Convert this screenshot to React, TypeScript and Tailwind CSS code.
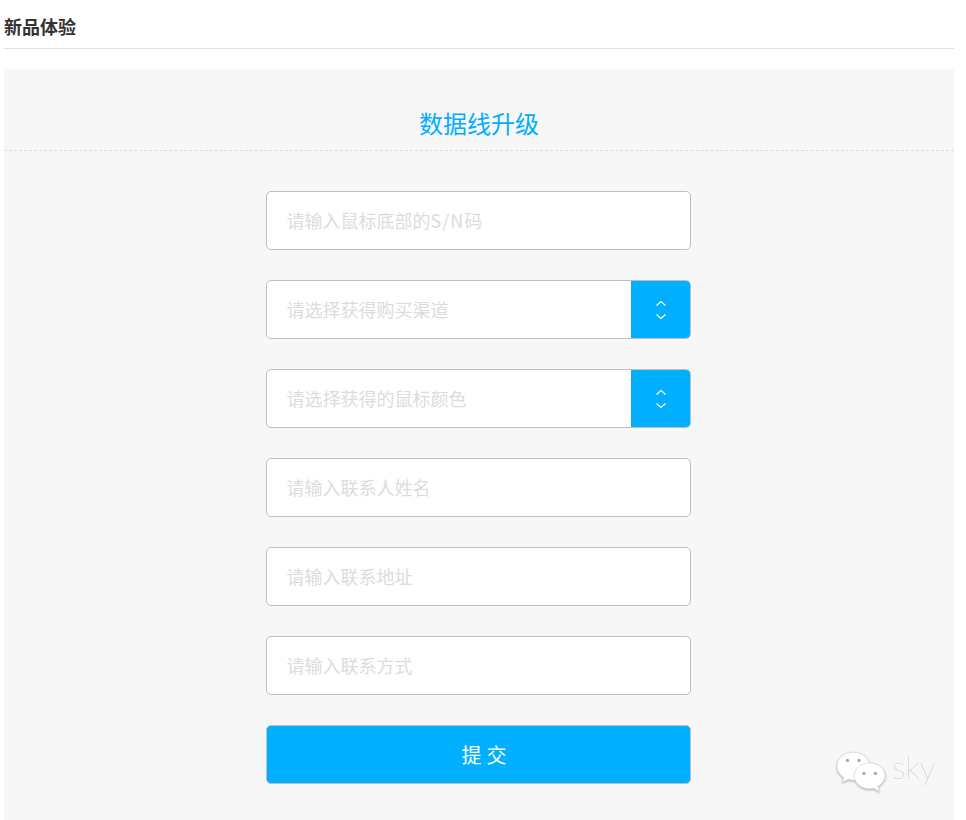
import React, { ReactNode } from "react";

const font = { fontFamily: '"Noto Sans CJK SC", sans-serif' };

function Chevrons() {
  return (
    <svg width="12" height="20" viewBox="0 0 12 20" fill="none" stroke="#ffffff" strokeWidth="1.2">
      <path d="M1.5 5.5 L6 1.5 L10.5 5.5" />
      <path d="M1.5 14.5 L6 18.5 L10.5 14.5" />
    </svg>
  );
}

function Field({ text, select }: { text: ReactNode; select?: boolean }) {
  return (
    <div className="flex h-[59px] w-[425px] overflow-hidden rounded-[5px] border border-[#bfbfbf] bg-white">
      <div className="flex flex-1 items-center pl-[20px] text-[18px] text-[#dcdcdc]">{text}</div>
      {select && (
        <div className="flex w-[59px] items-center justify-center bg-[#00b0ff] pl-[1px]">
          <Chevrons />
        </div>
      )}
    </div>
  );
}

function Watermark() {
  return (
    <div className="absolute left-[836px] top-[751px] flex items-start">
      <svg width="50" height="43" viewBox="0 0 52 44" className="drop-shadow-[0_1px_1px_rgba(0,0,0,0.3)]">
        <g fill="#ffffff" stroke="#d8d8d8" strokeWidth="0.8">
          <path d="M18 1 C8 1 1 7.5 1 15.5 C1 20.5 4 24.5 8 27 L6.5 32 L13 29 C15 29.7 17 30 19 30 C28 30 35 23.5 35 15.5 C35 7.5 28 1 18 1 Z" />
          <path d="M35 12 C26 12 19 18 19 25.5 C19 33 26 39 35 39 C36.5 39 38 38.8 39.5 38.3 L45 42 L43.5 36.5 C48 34 51 30 51 25.5 C51 18 44 12 35 12 Z" />
        </g>
        <g fill="#a8a8a8">
          <circle cx="12" cy="9.5" r="1.7" />
          <circle cx="24" cy="9.5" r="1.7" />
          <circle cx="29" cy="23" r="1.7" />
          <circle cx="41" cy="23" r="1.7" />
        </g>
      </svg>
      <span
        className="ml-[6px] mt-[-4px] text-[32px] leading-[40px] font-thin text-[#b4b4b4] drop-shadow-[0_1px_0_rgba(255,255,255,0.9)]"
        style={{ fontFamily: "Lato, sans-serif" }}
      >
        sky
      </span>
    </div>
  );
}

export default function App() {
  return (
    <div className="relative h-[820px] overflow-hidden bg-white pl-[4px] pr-[12px]" style={font}>
      <div className="flex h-[49px] items-end border-b border-[#dedede] pb-[8px]">
        <h1 className="text-[18px] leading-[27px] font-bold text-[#333333]">新品体验</h1>
      </div>
      <div className="mt-[20px] h-[751px] bg-[#f7f7f7]">
        <div className="flex h-[82px] items-end justify-center border-b border-dashed border-[#dddddd] pb-[13px]">
          <h2 className="text-[24px] leading-[28px] font-normal text-[#00aeff]">数据线升级</h2>
        </div>
        <div className="flex flex-col items-center gap-[30px] pt-[40px] pr-[2px]">
          <Field
            text={
              <span>
                请输入鼠标底部的<span className="tracking-[1px]">S/N</span>码
              </span>
            }
          />
          <Field text="请选择获得购买渠道" select />
          <Field text="请选择获得的鼠标颜色" select />
          <Field text="请输入联系人姓名" />
          <Field text="请输入联系地址" />
          <Field text="请输入联系方式" />
          <button className="h-[59px] w-[425px] rounded-[5px] border border-[#bfbfbf] bg-[#00b0ff] pl-[17px] text-[20px] font-normal tracking-[5px] text-white">
            提交
          </button>
        </div>
      </div>
      <Watermark />
    </div>
  );
}
